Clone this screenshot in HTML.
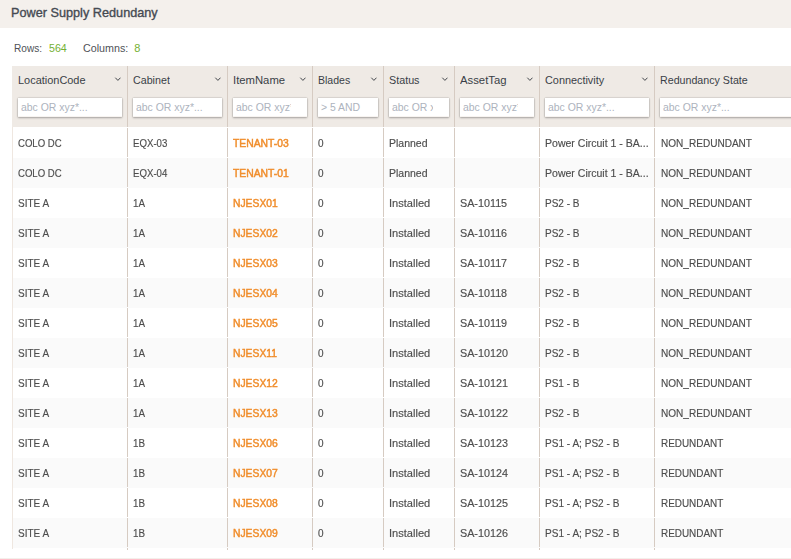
<!DOCTYPE html><html><head><meta charset="utf-8"><style>
*{margin:0;padding:0;box-sizing:border-box}
html,body{width:791px;height:559px;overflow:hidden;background:#fff;font-family:"Liberation Sans",sans-serif}
.abs{position:absolute}
#title{left:0;top:0;width:791px;height:28px;background:#f4f0ec}
#title span{position:absolute;left:11px;top:6px;font-size:12.7px;color:#454a52;line-height:14px;white-space:nowrap;-webkit-text-stroke:0.35px #454a52}
.stat{position:absolute;top:42px;font-size:11px;line-height:12px;color:#4f5257;white-space:nowrap}
.g{color:#74b032}
#thead{left:12px;top:66px;width:779px;height:61px;background:#efeae5}
.div{position:absolute;width:1px;background:#d6cbc2}
.ht{position:absolute;top:74px;font-size:11px;line-height:12px;color:#3a3f47;white-space:nowrap;transform-origin:0 0}
.chev{position:absolute;top:76px;width:8px;height:6px}
.inp{position:absolute;top:98px;height:19px;background:#fff;border-bottom:1px solid #f8f4f1;box-shadow:0 1px 2px rgba(0,0,0,.24),0 0 1.5px rgba(0,0,0,.3);overflow:hidden}
.ph{position:absolute;left:3px;top:0;height:19px;overflow:hidden}
.ph span{position:absolute;left:0;top:3px;font-size:11px;line-height:12px;color:#adb3bd;white-space:nowrap;transform-origin:0 0;transform:scaleX(.948)}
.row{position:absolute;left:13px;width:778px;height:30px}
.alt{background:#fafafa}
#body{position:absolute;left:0;top:0;width:791px;height:559px;will-change:transform}
.c{position:absolute;font-size:10.5px;line-height:12px;color:#4d4d4d;-webkit-text-stroke:0.15px #4d4d4d;white-space:nowrap;transform-origin:0 0}
.lk{color:#f08d2b;-webkit-text-stroke:0.45px #f08d2b}
#lb{left:12px;top:127px;width:1px;height:422px;background:#efe7e0}
#bot{left:0;top:558px;width:791px;height:1px;background:#f4efeb}
</style></head><body><div id="title" class="abs"><span>Power Supply Redundany</span></div>
<div class="stat" style="left:14px;transform:scaleX(.918);transform-origin:0 0">Rows:</div><div class="stat g" style="left:48.5px;transform:scaleX(.97);transform-origin:0 0">564</div>
<div class="stat" style="left:83px;transform:scaleX(.975);transform-origin:0 0">Columns:</div><div class="stat g" style="left:134.3px">8</div>
<div id="thead" class="abs"></div>
<div class="row" style="top:128px"></div>
<div class="row alt" style="top:158px"></div>
<div class="row" style="top:188px"></div>
<div class="row alt" style="top:218px"></div>
<div class="row" style="top:248px"></div>
<div class="row alt" style="top:278px"></div>
<div class="row" style="top:308px"></div>
<div class="row alt" style="top:338px"></div>
<div class="row" style="top:368px"></div>
<div class="row alt" style="top:398px"></div>
<div class="row" style="top:428px"></div>
<div class="row alt" style="top:458px"></div>
<div class="row" style="top:488px"></div>
<div class="row alt" style="top:518px"></div>
<div id="lb" class="abs"></div>
<div class="div" style="left:127px;top:66px;height:61px"></div>
<div class="div" style="left:127px;top:128px;height:29px"></div>
<div class="div" style="left:127px;top:158px;height:29px"></div>
<div class="div" style="left:127px;top:188px;height:29px"></div>
<div class="div" style="left:127px;top:218px;height:29px"></div>
<div class="div" style="left:127px;top:248px;height:29px"></div>
<div class="div" style="left:127px;top:278px;height:29px"></div>
<div class="div" style="left:127px;top:308px;height:29px"></div>
<div class="div" style="left:127px;top:338px;height:29px"></div>
<div class="div" style="left:127px;top:368px;height:29px"></div>
<div class="div" style="left:127px;top:398px;height:29px"></div>
<div class="div" style="left:127px;top:428px;height:29px"></div>
<div class="div" style="left:127px;top:458px;height:29px"></div>
<div class="div" style="left:127px;top:488px;height:29px"></div>
<div class="div" style="left:127px;top:518px;height:29px"></div>
<div class="div" style="left:127px;top:548px;height:2px"></div>
<div class="div" style="left:227px;top:66px;height:61px"></div>
<div class="div" style="left:227px;top:128px;height:29px"></div>
<div class="div" style="left:227px;top:158px;height:29px"></div>
<div class="div" style="left:227px;top:188px;height:29px"></div>
<div class="div" style="left:227px;top:218px;height:29px"></div>
<div class="div" style="left:227px;top:248px;height:29px"></div>
<div class="div" style="left:227px;top:278px;height:29px"></div>
<div class="div" style="left:227px;top:308px;height:29px"></div>
<div class="div" style="left:227px;top:338px;height:29px"></div>
<div class="div" style="left:227px;top:368px;height:29px"></div>
<div class="div" style="left:227px;top:398px;height:29px"></div>
<div class="div" style="left:227px;top:428px;height:29px"></div>
<div class="div" style="left:227px;top:458px;height:29px"></div>
<div class="div" style="left:227px;top:488px;height:29px"></div>
<div class="div" style="left:227px;top:518px;height:29px"></div>
<div class="div" style="left:227px;top:548px;height:2px"></div>
<div class="div" style="left:312px;top:66px;height:61px"></div>
<div class="div" style="left:312px;top:128px;height:29px"></div>
<div class="div" style="left:312px;top:158px;height:29px"></div>
<div class="div" style="left:312px;top:188px;height:29px"></div>
<div class="div" style="left:312px;top:218px;height:29px"></div>
<div class="div" style="left:312px;top:248px;height:29px"></div>
<div class="div" style="left:312px;top:278px;height:29px"></div>
<div class="div" style="left:312px;top:308px;height:29px"></div>
<div class="div" style="left:312px;top:338px;height:29px"></div>
<div class="div" style="left:312px;top:368px;height:29px"></div>
<div class="div" style="left:312px;top:398px;height:29px"></div>
<div class="div" style="left:312px;top:428px;height:29px"></div>
<div class="div" style="left:312px;top:458px;height:29px"></div>
<div class="div" style="left:312px;top:488px;height:29px"></div>
<div class="div" style="left:312px;top:518px;height:29px"></div>
<div class="div" style="left:312px;top:548px;height:2px"></div>
<div class="div" style="left:383px;top:66px;height:61px"></div>
<div class="div" style="left:383px;top:128px;height:29px"></div>
<div class="div" style="left:383px;top:158px;height:29px"></div>
<div class="div" style="left:383px;top:188px;height:29px"></div>
<div class="div" style="left:383px;top:218px;height:29px"></div>
<div class="div" style="left:383px;top:248px;height:29px"></div>
<div class="div" style="left:383px;top:278px;height:29px"></div>
<div class="div" style="left:383px;top:308px;height:29px"></div>
<div class="div" style="left:383px;top:338px;height:29px"></div>
<div class="div" style="left:383px;top:368px;height:29px"></div>
<div class="div" style="left:383px;top:398px;height:29px"></div>
<div class="div" style="left:383px;top:428px;height:29px"></div>
<div class="div" style="left:383px;top:458px;height:29px"></div>
<div class="div" style="left:383px;top:488px;height:29px"></div>
<div class="div" style="left:383px;top:518px;height:29px"></div>
<div class="div" style="left:383px;top:548px;height:2px"></div>
<div class="div" style="left:454px;top:66px;height:61px"></div>
<div class="div" style="left:454px;top:128px;height:29px"></div>
<div class="div" style="left:454px;top:158px;height:29px"></div>
<div class="div" style="left:454px;top:188px;height:29px"></div>
<div class="div" style="left:454px;top:218px;height:29px"></div>
<div class="div" style="left:454px;top:248px;height:29px"></div>
<div class="div" style="left:454px;top:278px;height:29px"></div>
<div class="div" style="left:454px;top:308px;height:29px"></div>
<div class="div" style="left:454px;top:338px;height:29px"></div>
<div class="div" style="left:454px;top:368px;height:29px"></div>
<div class="div" style="left:454px;top:398px;height:29px"></div>
<div class="div" style="left:454px;top:428px;height:29px"></div>
<div class="div" style="left:454px;top:458px;height:29px"></div>
<div class="div" style="left:454px;top:488px;height:29px"></div>
<div class="div" style="left:454px;top:518px;height:29px"></div>
<div class="div" style="left:454px;top:548px;height:2px"></div>
<div class="div" style="left:539px;top:66px;height:61px"></div>
<div class="div" style="left:539px;top:128px;height:29px"></div>
<div class="div" style="left:539px;top:158px;height:29px"></div>
<div class="div" style="left:539px;top:188px;height:29px"></div>
<div class="div" style="left:539px;top:218px;height:29px"></div>
<div class="div" style="left:539px;top:248px;height:29px"></div>
<div class="div" style="left:539px;top:278px;height:29px"></div>
<div class="div" style="left:539px;top:308px;height:29px"></div>
<div class="div" style="left:539px;top:338px;height:29px"></div>
<div class="div" style="left:539px;top:368px;height:29px"></div>
<div class="div" style="left:539px;top:398px;height:29px"></div>
<div class="div" style="left:539px;top:428px;height:29px"></div>
<div class="div" style="left:539px;top:458px;height:29px"></div>
<div class="div" style="left:539px;top:488px;height:29px"></div>
<div class="div" style="left:539px;top:518px;height:29px"></div>
<div class="div" style="left:539px;top:548px;height:2px"></div>
<div class="div" style="left:654px;top:66px;height:61px"></div>
<div class="div" style="left:654px;top:128px;height:29px"></div>
<div class="div" style="left:654px;top:158px;height:29px"></div>
<div class="div" style="left:654px;top:188px;height:29px"></div>
<div class="div" style="left:654px;top:218px;height:29px"></div>
<div class="div" style="left:654px;top:248px;height:29px"></div>
<div class="div" style="left:654px;top:278px;height:29px"></div>
<div class="div" style="left:654px;top:308px;height:29px"></div>
<div class="div" style="left:654px;top:338px;height:29px"></div>
<div class="div" style="left:654px;top:368px;height:29px"></div>
<div class="div" style="left:654px;top:398px;height:29px"></div>
<div class="div" style="left:654px;top:428px;height:29px"></div>
<div class="div" style="left:654px;top:458px;height:29px"></div>
<div class="div" style="left:654px;top:488px;height:29px"></div>
<div class="div" style="left:654px;top:518px;height:29px"></div>
<div class="div" style="left:654px;top:548px;height:2px"></div>
<div class="ht" style="left:18px;transform:scaleX(0.995)">LocationCode</div>
<svg class="chev" style="left:113px" viewBox="0 0 8 6"><polyline points="2.3,1.7 4.9,4.4 7.5,1.7" fill="none" stroke="#30343a" stroke-width="0.9"/></svg>
<div class="inp" style="left:18px;width:104px"><div class="ph" style="width:85px"><span>abc OR xyz*...</span></div></div>
<div class="ht" style="left:133px;transform:scaleX(0.972)">Cabinet</div>
<svg class="chev" style="left:213px" viewBox="0 0 8 6"><polyline points="2.3,1.7 4.9,4.4 7.5,1.7" fill="none" stroke="#30343a" stroke-width="0.9"/></svg>
<div class="inp" style="left:133px;width:89px"><div class="ph" style="width:70px"><span>abc OR xyz*...</span></div></div>
<div class="ht" style="left:233px;transform:scaleX(1.026)">ItemName</div>
<svg class="chev" style="left:298px" viewBox="0 0 8 6"><polyline points="2.3,1.7 4.9,4.4 7.5,1.7" fill="none" stroke="#30343a" stroke-width="0.9"/></svg>
<div class="inp" style="left:233px;width:74px"><div class="ph" style="width:55px"><span>abc OR xyz*...</span></div></div>
<div class="ht" style="left:318px;transform:scaleX(0.958)">Blades</div>
<svg class="chev" style="left:369px" viewBox="0 0 8 6"><polyline points="2.3,1.7 4.9,4.4 7.5,1.7" fill="none" stroke="#30343a" stroke-width="0.9"/></svg>
<div class="inp" style="left:318px;width:60px"><div class="ph" style="width:41px"><span>&gt; 5 AND</span></div></div>
<div class="ht" style="left:389px;transform:scaleX(0.978)">Status</div>
<svg class="chev" style="left:440px" viewBox="0 0 8 6"><polyline points="2.3,1.7 4.9,4.4 7.5,1.7" fill="none" stroke="#30343a" stroke-width="0.9"/></svg>
<div class="inp" style="left:389px;width:60px"><div class="ph" style="width:41px"><span>abc OR xyz*...</span></div></div>
<div class="ht" style="left:460px;transform:scaleX(1.028)">AssetTag</div>
<svg class="chev" style="left:525px" viewBox="0 0 8 6"><polyline points="2.3,1.7 4.9,4.4 7.5,1.7" fill="none" stroke="#30343a" stroke-width="0.9"/></svg>
<div class="inp" style="left:460px;width:74px"><div class="ph" style="width:55px"><span>abc OR xyz*...</span></div></div>
<div class="ht" style="left:545px;transform:scaleX(0.987)">Connectivity</div>
<svg class="chev" style="left:640px" viewBox="0 0 8 6"><polyline points="2.3,1.7 4.9,4.4 7.5,1.7" fill="none" stroke="#30343a" stroke-width="0.9"/></svg>
<div class="inp" style="left:545px;width:104px"><div class="ph" style="width:85px"><span>abc OR xyz*...</span></div></div>
<div class="ht" style="left:660px;transform:scaleX(0.969)">Redundancy State</div>
<div class="inp" style="left:660px;width:200px"><div class="ph" style="width:181px"><span>abc OR xyz*...</span></div></div>
<div id="body">
<div class="c" style="left:18px;top:137px;transform:scaleX(0.912)">COLO DC</div>
<div class="c" style="left:133px;top:137px;transform:scaleX(0.92)">EQX-03</div>
<div class="c lk" style="left:233px;top:137px;transform:scaleX(0.985)">TENANT-03</div>
<div class="c" style="left:318px;top:137px;transform:scaleX(0.95)">0</div>
<div class="c" style="left:389px;top:137px;transform:scaleX(1.0)">Planned</div>
<div class="c" style="left:545px;top:137px;transform:scaleX(1.003)">Power Circuit 1 - BA...</div>
<div class="c" style="left:660.5px;top:137px;transform:scaleX(0.957)">NON_REDUNDANT</div>
<div class="c" style="left:18px;top:167px;transform:scaleX(0.912)">COLO DC</div>
<div class="c" style="left:133px;top:167px;transform:scaleX(0.92)">EQX-04</div>
<div class="c lk" style="left:233px;top:167px;transform:scaleX(0.985)">TENANT-01</div>
<div class="c" style="left:318px;top:167px;transform:scaleX(0.95)">0</div>
<div class="c" style="left:389px;top:167px;transform:scaleX(1.0)">Planned</div>
<div class="c" style="left:545px;top:167px;transform:scaleX(1.003)">Power Circuit 1 - BA...</div>
<div class="c" style="left:660.5px;top:167px;transform:scaleX(0.957)">NON_REDUNDANT</div>
<div class="c" style="left:18px;top:197px;transform:scaleX(0.95)">SITE A</div>
<div class="c" style="left:133px;top:197px;transform:scaleX(0.935)">1A</div>
<div class="c lk" style="left:233px;top:197px;transform:scaleX(0.983)">NJESX01</div>
<div class="c" style="left:318px;top:197px;transform:scaleX(0.95)">0</div>
<div class="c" style="left:389px;top:197px;transform:scaleX(1.055)">Installed</div>
<div class="c" style="left:460px;top:197px;transform:scaleX(1.026)">SA-10115</div>
<div class="c" style="left:545px;top:197px;transform:scaleX(0.954)">PS2 - B</div>
<div class="c" style="left:660.5px;top:197px;transform:scaleX(0.957)">NON_REDUNDANT</div>
<div class="c" style="left:18px;top:227px;transform:scaleX(0.95)">SITE A</div>
<div class="c" style="left:133px;top:227px;transform:scaleX(0.935)">1A</div>
<div class="c lk" style="left:233px;top:227px;transform:scaleX(0.983)">NJESX02</div>
<div class="c" style="left:318px;top:227px;transform:scaleX(0.95)">0</div>
<div class="c" style="left:389px;top:227px;transform:scaleX(1.055)">Installed</div>
<div class="c" style="left:460px;top:227px;transform:scaleX(1.026)">SA-10116</div>
<div class="c" style="left:545px;top:227px;transform:scaleX(0.954)">PS2 - B</div>
<div class="c" style="left:660.5px;top:227px;transform:scaleX(0.957)">NON_REDUNDANT</div>
<div class="c" style="left:18px;top:257px;transform:scaleX(0.95)">SITE A</div>
<div class="c" style="left:133px;top:257px;transform:scaleX(0.935)">1A</div>
<div class="c lk" style="left:233px;top:257px;transform:scaleX(0.983)">NJESX03</div>
<div class="c" style="left:318px;top:257px;transform:scaleX(0.95)">0</div>
<div class="c" style="left:389px;top:257px;transform:scaleX(1.055)">Installed</div>
<div class="c" style="left:460px;top:257px;transform:scaleX(1.026)">SA-10117</div>
<div class="c" style="left:545px;top:257px;transform:scaleX(0.954)">PS2 - B</div>
<div class="c" style="left:660.5px;top:257px;transform:scaleX(0.957)">NON_REDUNDANT</div>
<div class="c" style="left:18px;top:287px;transform:scaleX(0.95)">SITE A</div>
<div class="c" style="left:133px;top:287px;transform:scaleX(0.935)">1A</div>
<div class="c lk" style="left:233px;top:287px;transform:scaleX(0.983)">NJESX04</div>
<div class="c" style="left:318px;top:287px;transform:scaleX(0.95)">0</div>
<div class="c" style="left:389px;top:287px;transform:scaleX(1.055)">Installed</div>
<div class="c" style="left:460px;top:287px;transform:scaleX(1.026)">SA-10118</div>
<div class="c" style="left:545px;top:287px;transform:scaleX(0.954)">PS2 - B</div>
<div class="c" style="left:660.5px;top:287px;transform:scaleX(0.957)">NON_REDUNDANT</div>
<div class="c" style="left:18px;top:317px;transform:scaleX(0.95)">SITE A</div>
<div class="c" style="left:133px;top:317px;transform:scaleX(0.935)">1A</div>
<div class="c lk" style="left:233px;top:317px;transform:scaleX(0.983)">NJESX05</div>
<div class="c" style="left:318px;top:317px;transform:scaleX(0.95)">0</div>
<div class="c" style="left:389px;top:317px;transform:scaleX(1.055)">Installed</div>
<div class="c" style="left:460px;top:317px;transform:scaleX(1.026)">SA-10119</div>
<div class="c" style="left:545px;top:317px;transform:scaleX(0.954)">PS2 - B</div>
<div class="c" style="left:660.5px;top:317px;transform:scaleX(0.957)">NON_REDUNDANT</div>
<div class="c" style="left:18px;top:347px;transform:scaleX(0.95)">SITE A</div>
<div class="c" style="left:133px;top:347px;transform:scaleX(0.935)">1A</div>
<div class="c lk" style="left:233px;top:347px;transform:scaleX(0.983)">NJESX11</div>
<div class="c" style="left:318px;top:347px;transform:scaleX(0.95)">0</div>
<div class="c" style="left:389px;top:347px;transform:scaleX(1.055)">Installed</div>
<div class="c" style="left:460px;top:347px;transform:scaleX(1.026)">SA-10120</div>
<div class="c" style="left:545px;top:347px;transform:scaleX(0.954)">PS2 - B</div>
<div class="c" style="left:660.5px;top:347px;transform:scaleX(0.957)">NON_REDUNDANT</div>
<div class="c" style="left:18px;top:377px;transform:scaleX(0.95)">SITE A</div>
<div class="c" style="left:133px;top:377px;transform:scaleX(0.935)">1A</div>
<div class="c lk" style="left:233px;top:377px;transform:scaleX(0.983)">NJESX12</div>
<div class="c" style="left:318px;top:377px;transform:scaleX(0.95)">0</div>
<div class="c" style="left:389px;top:377px;transform:scaleX(1.055)">Installed</div>
<div class="c" style="left:460px;top:377px;transform:scaleX(1.026)">SA-10121</div>
<div class="c" style="left:545px;top:377px;transform:scaleX(0.954)">PS1 - B</div>
<div class="c" style="left:660.5px;top:377px;transform:scaleX(0.957)">NON_REDUNDANT</div>
<div class="c" style="left:18px;top:407px;transform:scaleX(0.95)">SITE A</div>
<div class="c" style="left:133px;top:407px;transform:scaleX(0.935)">1A</div>
<div class="c lk" style="left:233px;top:407px;transform:scaleX(0.983)">NJESX13</div>
<div class="c" style="left:318px;top:407px;transform:scaleX(0.95)">0</div>
<div class="c" style="left:389px;top:407px;transform:scaleX(1.055)">Installed</div>
<div class="c" style="left:460px;top:407px;transform:scaleX(1.026)">SA-10122</div>
<div class="c" style="left:545px;top:407px;transform:scaleX(0.954)">PS2 - B</div>
<div class="c" style="left:660.5px;top:407px;transform:scaleX(0.957)">NON_REDUNDANT</div>
<div class="c" style="left:18px;top:437px;transform:scaleX(0.95)">SITE A</div>
<div class="c" style="left:133px;top:437px;transform:scaleX(0.935)">1B</div>
<div class="c lk" style="left:233px;top:437px;transform:scaleX(0.983)">NJESX06</div>
<div class="c" style="left:318px;top:437px;transform:scaleX(0.95)">0</div>
<div class="c" style="left:389px;top:437px;transform:scaleX(1.055)">Installed</div>
<div class="c" style="left:460px;top:437px;transform:scaleX(1.026)">SA-10123</div>
<div class="c" style="left:545px;top:437px;transform:scaleX(0.958)">PS1 - A; PS2 - B</div>
<div class="c" style="left:660.5px;top:437px;transform:scaleX(0.945)">REDUNDANT</div>
<div class="c" style="left:18px;top:467px;transform:scaleX(0.95)">SITE A</div>
<div class="c" style="left:133px;top:467px;transform:scaleX(0.935)">1B</div>
<div class="c lk" style="left:233px;top:467px;transform:scaleX(0.983)">NJESX07</div>
<div class="c" style="left:318px;top:467px;transform:scaleX(0.95)">0</div>
<div class="c" style="left:389px;top:467px;transform:scaleX(1.055)">Installed</div>
<div class="c" style="left:460px;top:467px;transform:scaleX(1.026)">SA-10124</div>
<div class="c" style="left:545px;top:467px;transform:scaleX(0.958)">PS1 - A; PS2 - B</div>
<div class="c" style="left:660.5px;top:467px;transform:scaleX(0.945)">REDUNDANT</div>
<div class="c" style="left:18px;top:497px;transform:scaleX(0.95)">SITE A</div>
<div class="c" style="left:133px;top:497px;transform:scaleX(0.935)">1B</div>
<div class="c lk" style="left:233px;top:497px;transform:scaleX(0.983)">NJESX08</div>
<div class="c" style="left:318px;top:497px;transform:scaleX(0.95)">0</div>
<div class="c" style="left:389px;top:497px;transform:scaleX(1.055)">Installed</div>
<div class="c" style="left:460px;top:497px;transform:scaleX(1.026)">SA-10125</div>
<div class="c" style="left:545px;top:497px;transform:scaleX(0.958)">PS1 - A; PS2 - B</div>
<div class="c" style="left:660.5px;top:497px;transform:scaleX(0.945)">REDUNDANT</div>
<div class="c" style="left:18px;top:527px;transform:scaleX(0.95)">SITE A</div>
<div class="c" style="left:133px;top:527px;transform:scaleX(0.935)">1B</div>
<div class="c lk" style="left:233px;top:527px;transform:scaleX(0.983)">NJESX09</div>
<div class="c" style="left:318px;top:527px;transform:scaleX(0.95)">0</div>
<div class="c" style="left:389px;top:527px;transform:scaleX(1.055)">Installed</div>
<div class="c" style="left:460px;top:527px;transform:scaleX(1.026)">SA-10126</div>
<div class="c" style="left:545px;top:527px;transform:scaleX(0.958)">PS1 - A; PS2 - B</div>
<div class="c" style="left:660.5px;top:527px;transform:scaleX(0.945)">REDUNDANT</div>
</div>
<div id="bot" class="abs"></div></body></html>
